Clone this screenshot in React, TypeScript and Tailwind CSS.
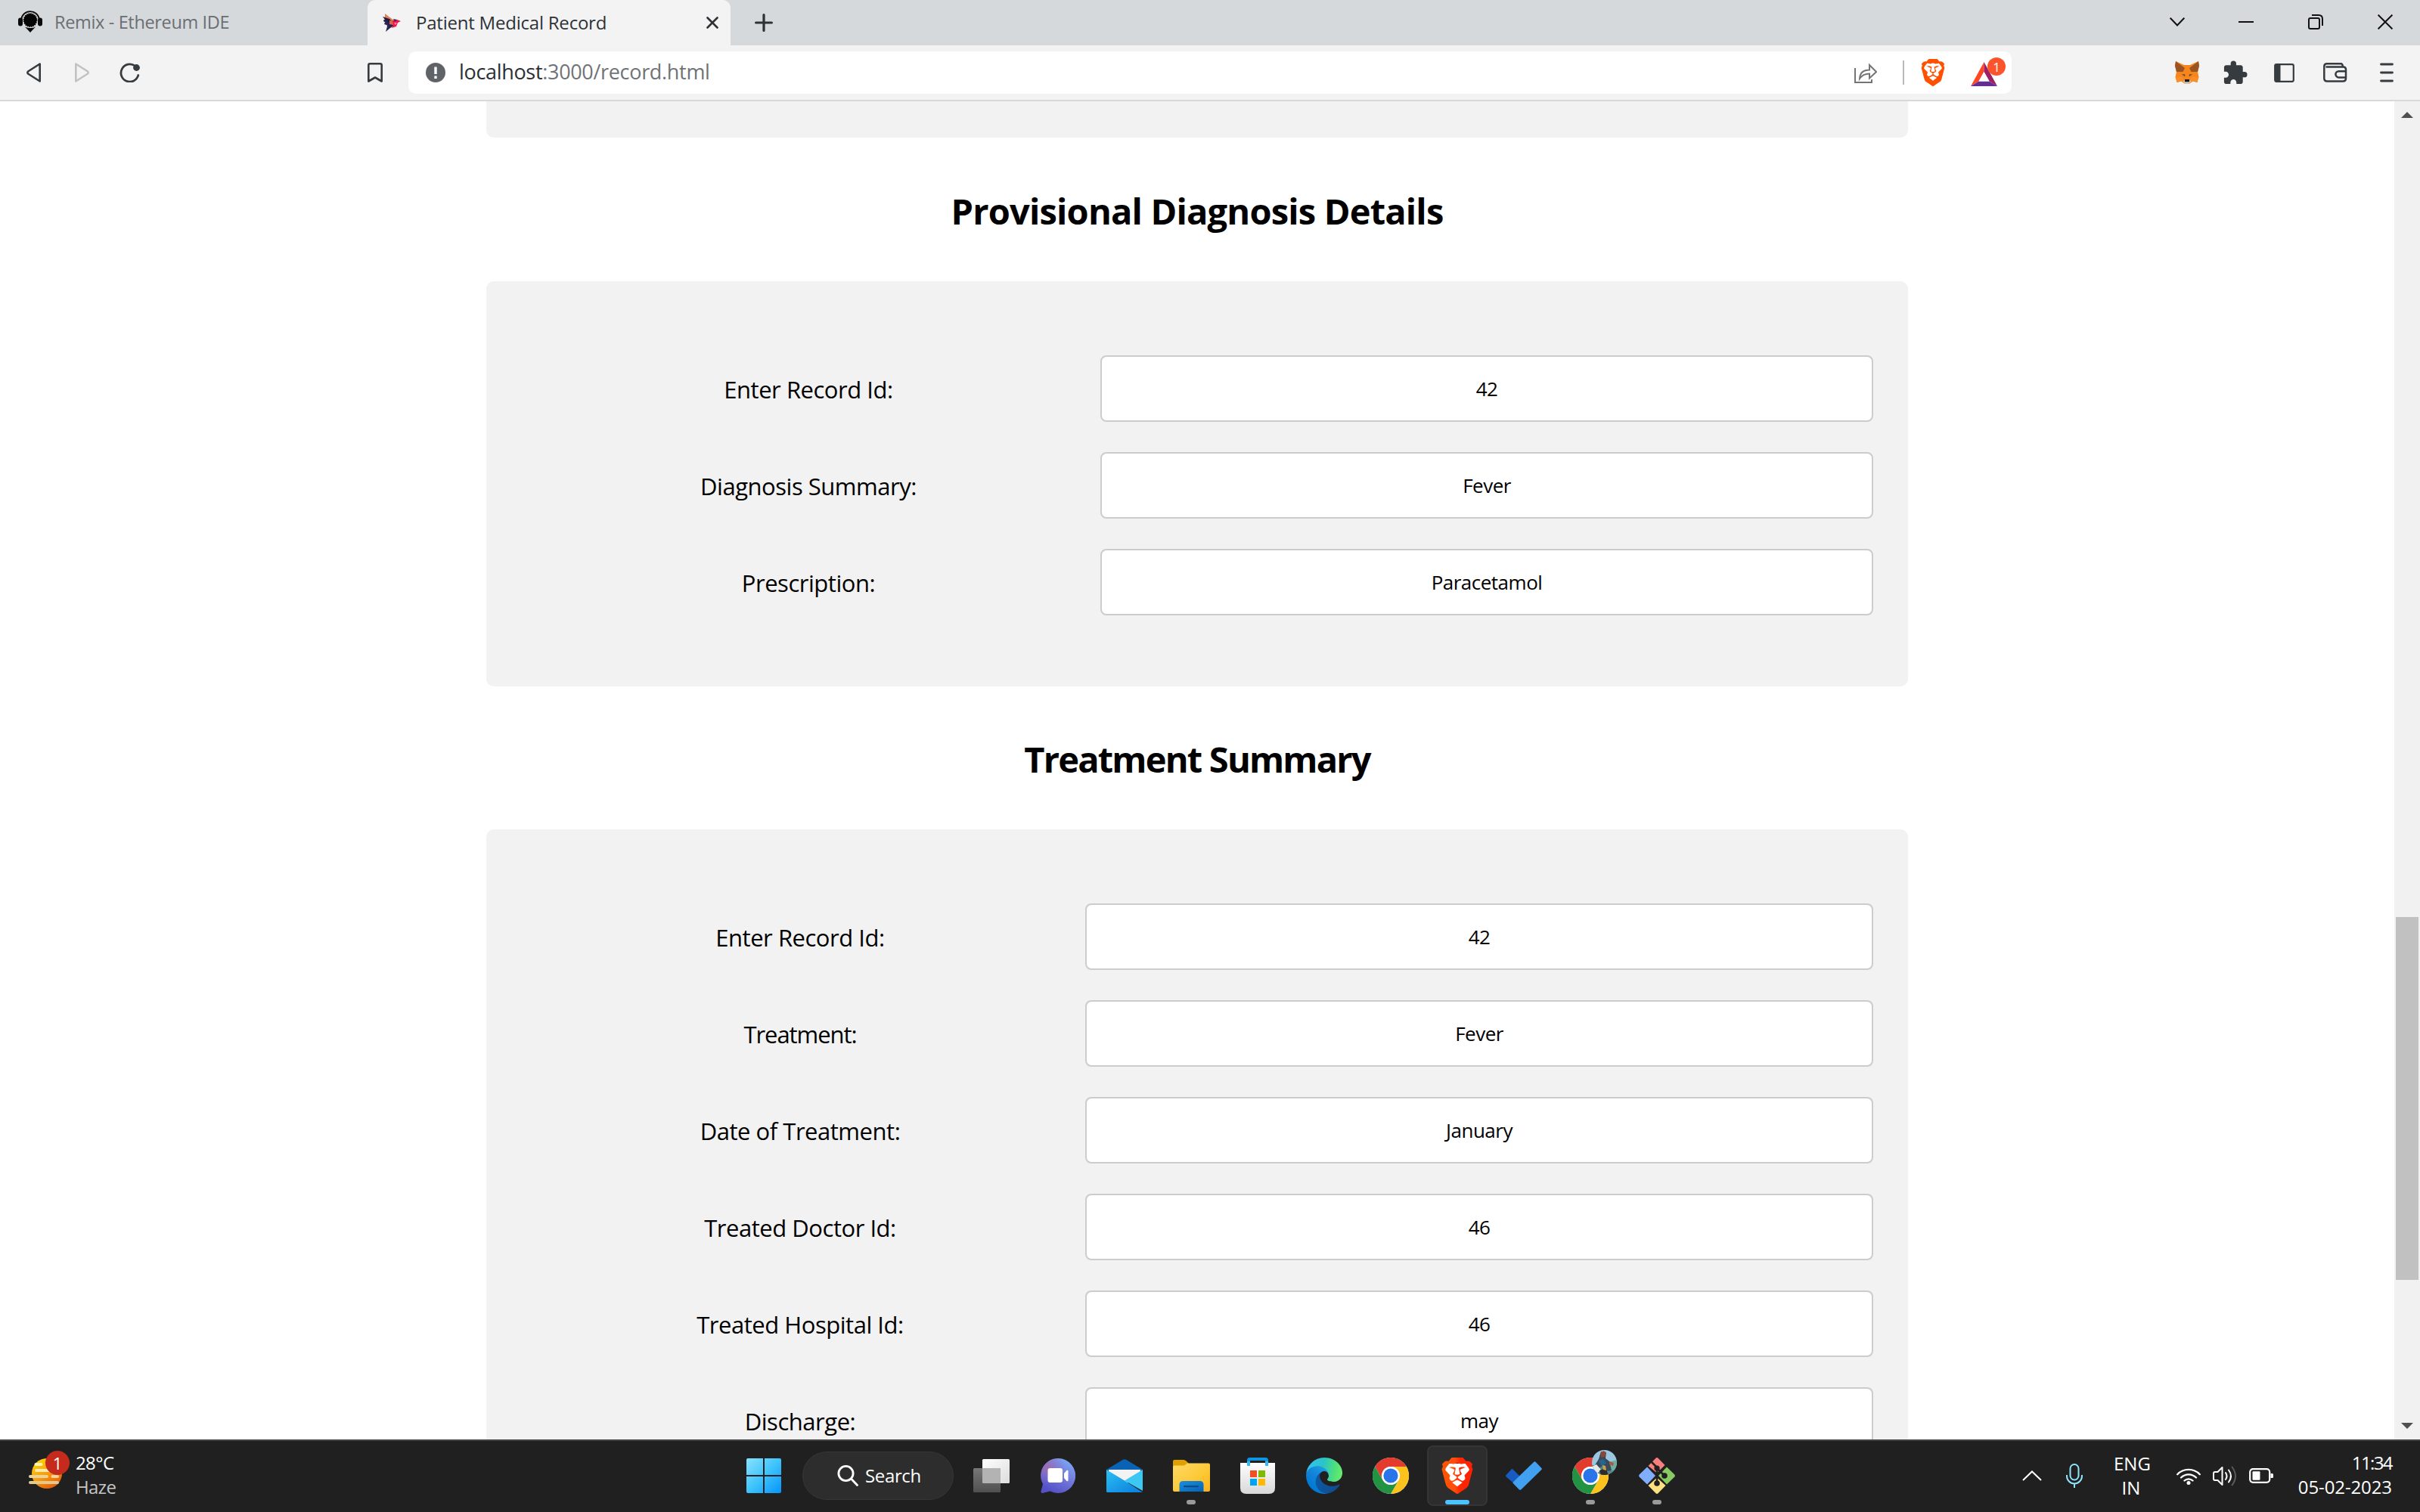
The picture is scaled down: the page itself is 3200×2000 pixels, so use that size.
import type { ReactNode } from "react";
import { SiBrave } from "react-icons/si";
import { MdExtension } from "react-icons/md";

/* ---------- browser icons ---------- */

function RemixIcon() {
  return (
    <svg className="ml-6 h-[30px] w-8 shrink-0" viewBox="0 0 32 30" fill="none">
      <path d="M4 12C5 5 10 1.2 16 1.2S27 5 28 12" stroke="#0a0a0a" strokeWidth="1.8" />
      <rect x="0" y="9.5" width="6" height="11" rx="3" fill="#0a0a0a" />
      <rect x="26" y="9.5" width="6" height="11" rx="3" fill="#0a0a0a" />
      <circle cx="16" cy="12.6" r="8.6" fill="#050505" />
      <circle cx="16" cy="12.6" r="8.6" stroke="#050505" strokeWidth="1.6" strokeDasharray="1.6 1.1" />
      <path d="M9 21.5c4.500 2 9.500 2 14 0L16 29z" fill="#0a0a0a" />
    </svg>
  );
}

function BirdIcon() {
  return (
    <svg className="ml-5 h-6 w-6 shrink-0" viewBox="0 0 24 24">
      <path d="M3 0l8 6 4 3-4 3-8-3z" fill="#e08055" />
      <path d="M0 4l9 3 5 5-6 4-6-3 2-2-3-2 2-1z" fill="#211a3f" />
      <path d="M2 8l6 3-3 4-3-1 2-2-3-2z" fill="#2b2350" />
      <path d="M5 13l6-3 4 6-5 3-6 5 2-7z" fill="#2b2350" />
      <path d="M9 9l6 1-1 5-5-1z" fill="#d9644c" />
      <path d="M13 9l6-1 5 2-4 2-2 5-6 2 2-4z" fill="#ee1748" />
      <path d="M14 7l5 1-3 3z" fill="#3a2a55" />
      <circle cx="17" cy="13" r="1.600" fill="#ff6f9b" />
    </svg>
  );
}

function ReloadIcon() {
  return (
    <svg className="ml-10 h-[26px] w-7" viewBox="0 0 28 26" fill="none">
      <path d="M20.500 4.200A11.600 11.600 0 1 0 24.800 16.500" stroke="#363b3f" strokeWidth="2.800" strokeLinecap="round" />
      <circle cx="22.500" cy="6.500" r="4.400" fill="#363b3f" />
    </svg>
  );
}

function ShareIcon() {
  return (
    <svg className="h-[27px] w-[30px]" viewBox="0 0 30 27" fill="none" stroke="#757575" strokeWidth="2">
      <path d="M1 7v19h22v-4" />
      <path d="M7 21c.500-8 5-11.500 13-11.500V3l9 9-9 8.500v-6C14 14.500 10 16.500 7 21z" />
    </svg>
  );
}

function BraveLion({ size }: { size: "small" | "large" }) {
  const box = size === "small" ? "h-9 w-9" : "h-12 w-12";
  return (
    <div className={"grid shrink-0 place-items-center " + box}>
      <svg className={"[grid-area:1/1] " + box} viewBox="0 0 24 24">
        <defs>
          <linearGradient id="braveLarge" x1="0" y1="0" x2="1" y2="0">
            <stop offset="0" stopColor="#ff5500" />
            <stop offset="0.42" stopColor="#ff4d0d" />
            <stop offset="0.6" stopColor="#ff2600" />
            <stop offset="1" stopColor="#ff2000" />
          </linearGradient>
        </defs>
        <path d="M5 4h14l1.500 4-3 10-5.500 3.500L6.500 18l-3-10z" fill="#fff" />
      </svg>
      {size === "small" ? (
        <SiBrave className="h-9 w-9 text-[#ff5000] [grid-area:1/1]" />
      ) : (
        <SiBrave className="h-12 w-12 [grid-area:1/1] [&_path]:fill-[url(#braveLarge)]" />
      )}
    </div>
  );
}

function RewardsIcon() {
  return (
    <div className="relative ml-8 h-9 w-[47px]">
      <svg className="mt-1 h-8 w-[35px]" viewBox="0 0 35 32">
        <path d="M17.500 0L0 32l10.500-6.500L17.500 13z" fill="#ff4724" />
        <path d="M17.500 0L35 32l-10.500-6.500L17.500 13z" fill="#9e1f63" />
        <path d="M0 32h35l-10.500-6.500h-14z" fill="#662d91" />
        <path d="M17.500 13l7 12.500h-14z" fill="#fff" />
      </svg>
      <span className="absolute -top-0.5 left-[22px] flex h-6 w-6 items-center justify-center rounded-full bg-[#fb542b] text-[17px] leading-none text-white">
        1
      </span>
    </div>
  );
}

function FoxIcon() {
  return (
    <svg className="h-[30px] w-8" viewBox="0 0 32 30">
      <path d="M1 0l11 5h8l11-5 1 6-2 8 1.500 7-2 7-6-1.500-4 3h-7l-4-3L2.500 28l-2-7L2 14 0 6z" fill="#f6851b" />
      <path d="M1 0l12 9-2.500 5L2 14 0 6zM31 0L19 9l2.500 5 8.500 0 2-8z" fill="#9a5424" />
      <path d="M2 21h8l1.500 5-3 .500-6 1.500zM30 21h-8l-1.500 5 3 .500 6 1.500z" fill="#f98f28" />
      <path d="M8 17l5 0 1 3zM24 17l-5 0-1 3z" fill="#c9601a" />
      <path d="M9.500 17.500h3.500v2.500zM22.500 17.500H19v2.500z" fill="#4a4a4a" />
      <path d="M10.500 26.500l3-2.500h5l3 2.500-3 3.500h-5z" fill="#cfc0b2" />
      <path d="M13 24h6v3.200h-6z" fill="#161616" />
    </svg>
  );
}

function SidebarIcon() {
  return (
    <svg className="ml-[37px] h-[25px] w-[27px]" viewBox="0 0 27 25" fill="none">
      <rect x="1.200" y="1.200" width="24.600" height="22.600" rx="2" stroke="#363b3f" strokeWidth="2.200" />
      <path d="M1 1h7.500v23H1z" fill="#363b3f" />
    </svg>
  );
}

function WalletIcon() {
  return (
    <svg className="ml-[38px] h-[26px] w-8" viewBox="0 0 32 26" fill="none" stroke="#363b3f" strokeWidth="2.500">
      <path d="M1.300 5v15.500q0 4 4 4H26q4 0 4-4V9q0-3.500-3.500-3.500H3.500" />
      <path d="M1.300 5q0-3.700 3.700-3.700h18.500q2 0 2.500 4" />
      <path d="M30 11.200h-9.500a4.100 4.100 0 0 0 0 8.200H30" />
    </svg>
  );
}

/* ---------- taskbar icons ---------- */

function WindowsLogo() {
  return (
    <svg className="h-[46px] w-[46px]" viewBox="0 0 46 46">
      <defs>
        <linearGradient id="win" gradientUnits="userSpaceOnUse" x1="0" y1="0" x2="46" y2="46">
          <stop offset="0" stopColor="#8ae2fd" />
          <stop offset="0.5" stopColor="#3fc4fc" />
          <stop offset="1" stopColor="#0594fb" />
        </linearGradient>
      </defs>
      <path d="M2 0h20v22H0V2q0-2 2-2zM24 0h20q2 0 2 2v20H24zM0 24h22v22H2q-2 0-2-2zM24 24h22v20q0 2-2 2H24z" fill="url(#win)" />
    </svg>
  );
}

function TaskViewIcon() {
  return (
    <svg className="h-11 w-12" viewBox="0 0 48 44">
      <defs>
        <linearGradient id="tv" x1="0" y1="0" x2="1" y2="1">
          <stop offset="0" stopColor="#fff" />
          <stop offset="1" stopColor="#dcdcdc" />
        </linearGradient>
        <linearGradient id="tvf" x1="0" y1="0" x2="0" y2="1">
          <stop offset="0" stopColor="#777" />
          <stop offset="1" stopColor="#505050" />
        </linearGradient>
      </defs>
      <rect x="12" y="0" width="36" height="32" rx="1.500" fill="url(#tv)" />
      <rect x="0" y="12" width="36" height="32" rx="1.500" fill="url(#tvf)" />
      <path d="M12 12h24v20H13.500q-1.500 0-1.500-1.500z" fill="#b3b3b3" />
    </svg>
  );
}

function ChatIcon() {
  return (
    <svg className="h-[46px] w-[46px]" viewBox="0 0 46 46">
      <defs>
        <linearGradient id="chat" x1="0.9" y1="0.1" x2="0.4" y2="1">
          <stop offset="0" stopColor="#7ba7f3" />
          <stop offset="0.5" stopColor="#7377da" />
          <stop offset="1" stopColor="#5552c9" />
        </linearGradient>
        <radialGradient id="chatGlow" cx="0.2" cy="0.25" r="0.5">
          <stop offset="0" stopColor="#a16aae" stopOpacity="0.9" />
          <stop offset="1" stopColor="#8a70c8" stopOpacity="0" />
        </radialGradient>
      </defs>
      <path d="M23 0a23 23 0 1 1-10.500 43.400L2.500 46Q0 46 .500 43.500L3 34A23 23 0 0 1 23 0z" fill="url(#chat)" />
      <path d="M23 0a23 23 0 1 1-10.500 43.400L2.500 46Q0 46 .500 43.500L3 34A23 23 0 0 1 23 0z" fill="url(#chatGlow)" />
      <rect x="9.500" y="13" width="19.500" height="19" rx="3" fill="#fff" />
      <path d="M31 20l3.500-4q2-1 2 1v12q0 2-2 1L31 26z" fill="#fff" />
    </svg>
  );
}

function MailIcon() {
  return (
    <svg className="h-11 w-12" viewBox="0 0 48 44">
      <defs>
        <linearGradient id="mailL" x1="0" y1="0" x2="1" y2="1">
          <stop offset="0" stopColor="#2cc0f5" />
          <stop offset="1" stopColor="#0a7cdc" />
        </linearGradient>
      </defs>
      <path d="M22 .800q2-1.200 4 0L48 14v4H0v-4z" fill="#0a62b4" />
      <path d="M3 14h42v6L24 34 3 20z" fill="#f3f3f3" />
      <path d="M48 14v28L24 28.500z" fill="#3dc8f4" />
      <path d="M0 14l24 14.500L48 44H1.500Q0 44 0 42.500z" fill="url(#mailL)" />
    </svg>
  );
}

function ExplorerIcon() {
  return (
    <svg className="h-[42px] w-[49px]" viewBox="0 0 49 42">
      <defs>
        <linearGradient id="fold" x1="0" y1="0" x2="1" y2="1">
          <stop offset="0" stopColor="#ffd969" />
          <stop offset="0.6" stopColor="#fcc834" />
          <stop offset="1" stopColor="#f7b21c" />
        </linearGradient>
        <linearGradient id="foldB" x1="0" y1="0" x2="1" y2="1">
          <stop offset="0" stopColor="#1c8fdc" />
          <stop offset="1" stopColor="#0463b6" />
        </linearGradient>
      </defs>
      <path d="M0 2q0-2 2-2h12q2 0 3.500 1.500L21 5v5H0z" fill="#e0a000" />
      <path d="M0 9.500q0-2 2-2h13l4-3h28q2 0 2 2V40q0 2-2 2H2q-2 0-2-2z" fill="url(#fold)" />
      <path d="M8.500 42V33q0-5 5-5h22q5 0 5 5v9z" fill="url(#foldB)" />
      <rect x="14" y="34" width="20" height="2.200" rx="1.100" fill="#0b4c88" />
    </svg>
  );
}

function StoreIcon() {
  return (
    <svg className="h-12 w-[46px]" viewBox="0 0 46 48">
      <defs>
        <linearGradient id="bag" x1="0" y1="0" x2="0" y2="1">
          <stop offset="0" stopColor="#fefefe" />
          <stop offset="1" stopColor="#d8d8d8" />
        </linearGradient>
      </defs>
      <path d="M0 7h46v33q0 8-8 8H8q-8 0-8-8z" fill="url(#bag)" />
      <path d="M11 11V3.500Q11 2 12.500 2h21Q35 2 35 3.500V11" fill="none" stroke="#0f94e4" strokeWidth="4" />
      <path d="M9 5h4v6H9zM33 5h4v6h-4z" fill="#35b9ee" />
      <path d="M13 17h9v9h-9z" fill="#f25022" />
      <path d="M24 17h9v9h-9z" fill="#7fba00" />
      <path d="M13 28h9v9h-9z" fill="#00a4ef" />
      <path d="M24 28h9v9h-9z" fill="#ffb900" />
    </svg>
  );
}

function EdgeIcon() {
  return (
    <svg className="h-12 w-12" viewBox="0 0 256 256">
      <defs>
        <linearGradient id="edgeA" x1="63" y1="177" x2="241" y2="177" gradientUnits="userSpaceOnUse">
          <stop offset="0" stopColor="#0c59a4" />
          <stop offset="1" stopColor="#114a8b" />
        </linearGradient>
        <linearGradient id="edgeB" x1="157" y1="100" x2="46" y2="222" gradientUnits="userSpaceOnUse">
          <stop offset="0" stopColor="#1b9de2" />
          <stop offset="0.5" stopColor="#1383d8" />
          <stop offset="1" stopColor="#0078d4" />
        </linearGradient>
        <linearGradient id="edgeC" x1="10" y1="60" x2="250" y2="100" gradientUnits="userSpaceOnUse">
          <stop offset="0" stopColor="#35c1f1" />
          <stop offset="0.45" stopColor="#2bc3c7" />
          <stop offset="0.8" stopColor="#4fe07a" />
          <stop offset="1" stopColor="#66eb6e" />
        </linearGradient>
      </defs>
      <path d="M231 190.500c-3.400 1.800-6.900 3.400-10.500 4.700a101 101 0 0 1-35.900 6.500c-47.300 0-88.500-32.500-88.500-74.300.100-11.400 6.400-21.900 16.400-27.300-42.800 1.800-53.800 46.400-53.800 72.500 0 73.900 68.100 81.400 82.800 81.400 7.900 0 19.800-2.300 27-4.600l1.300-.400a128 128 0 0 0 66.600-52.800 4 4 0 0 0-5.400-5.700z" fill="url(#edgeA)" />
      <path d="M105.700 241.400a79.200 79.200 0 0 1-22.700-21.300 80.700 80.700 0 0 1 29.500-120c3.200-1.500 8.500-4.100 15.600-4a32.400 32.400 0 0 1 25.700 13 31.900 31.900 0 0 1 6.300 18.700c0-.200 24.500-79.600-80-79.600-43.900 0-80 41.700-80 78.200a130.200 130.200 0 0 0 12.100 56 128 128 0 0 0 156.400 67.100 75.500 75.500 0 0 1-62.800-8z" fill="url(#edgeB)" />
      <path d="M152.300 148.900c-.900 1-3.400 2.500-3.400 5.600 0 2.600 1.700 5.200 4.800 7.300 14.400 10.100 41.700 8.700 41.800 8.700a59.600 59.600 0 0 0 30.300-8.300 61.400 61.400 0 0 0 30.400-52.900c.300-22.400-8-37.300-11.300-43.900C223.500 23.900 177.700 0 128 0A128 128 0 0 0 0 126.200c.500-36.500 36.800-66 80-66 3.500 0 23.500.300 42 10.100 16.300 8.600 24.900 18.900 30.800 29.200 6.200 10.700 7.300 24.100 7.300 29.500s-2.700 13.300-7.800 19.900z" fill="url(#edgeC)" />
    </svg>
  );
}

function ChromeIcon() {
  return (
    <svg className="h-12 w-12" viewBox="0 0 48 48">
      <circle cx="24" cy="24" r="24" fill="#fff" />
      <path d="M24 12h20.800A24 24 0 0 0 3.200 12l10.400 18A12 12 0 0 1 24 12z" fill="#e33b2e" />
      <path d="M34.400 30L24 48A24 24 0 0 0 44.800 12H24a12 12 0 0 1 10.400 18z" fill="#fcc31e" />
      <path d="M13.600 30L3.200 12A24 24 0 0 0 24 48l10.400-18a12 12 0 0 1-20.800 0z" fill="#229342" />
      <circle cx="24" cy="24" r="11.800" fill="#fff" />
      <circle cx="24" cy="24" r="9.600" fill="#2a74ea" />
    </svg>
  );
}

function ChromeProfileIcon() {
  return (
    <div className="relative h-12 w-12">
      <ChromeIcon />
      <svg className="absolute -top-2.5 left-[26px] h-[33px] w-[33px]" viewBox="0 0 33 33">
        <defs>
          <clipPath id="av">
            <circle cx="16.500" cy="16.500" r="16.500" />
          </clipPath>
        </defs>
        <g clipPath="url(#av)">
          <path d="M0 0h33v33H0z" fill="#9cc7e0" />
          <path d="M0 20h33v13H0z" fill="#56837f" />
          <path d="M22 16l11-3v12l-8 3z" fill="#6fae9d" />
          <path d="M12 2l7 1-1 8 5 4 3 12-8 1-3-8-8 6-3-6 5-8z" fill="#38495a" />
          <path d="M12 3l4-2 3 3-2 5-5 1z" fill="#8d4538" />
          <path d="M9 14l6-2 4 5-6 5z" fill="#24668f" />
          <path d="M23 15l6 2-1 4-5-2z" fill="#a65b47" />
          <path d="M0 22l6-3 6 7-5 5z" fill="#e4e8e6" />
          <path d="M10 27l8-3 4 9H12z" fill="#2c2c2c" />
          <path d="M14 20l4 1 1 6-4-1z" fill="#c9a14b" />
        </g>
      </svg>
    </div>
  );
}

function TodoIcon() {
  return (
    <svg className="h-[38px] w-12" viewBox="0 0 48 38">
      <path d="M9.500 10.500l10.500 10.500L10 28.500.600 20.500q-1-1.200 0-2.400l7-7.600q1-.900 1.900 0z" fill="#185abd" />
      <path d="M39.500.800L47.400 9q1 1 0 2L20.500 37.200q-1.500 1.200-2.800 0L10 29.200q-1-1 0-2L37.300.800q1.100-1 2.200 0z" fill="#41a0f0" />
    </svg>
  );
}

function GitIcon() {
  return (
    <svg className="h-12 w-12" viewBox="0 0 48 48">
      <path d="M22.500.700q1.500-1.200 3 0L34.500 10 24 20.500 12.500 11z" fill="#f77f7c" />
      <path d="M.700 22.500L11 12.500 22 24 11 35.500.700 25.500q-1-1.500 0-3z" fill="#80aefb" />
      <path d="M47.300 22.500L37 12.500 26 24l11 11.500 10.300-10q1-1.500 0-3z" fill="#8acb61" />
      <path d="M22.500 47.300q1.500 1.200 3 0L35.500 37 24 26.500 12.500 37z" fill="#fde180" />
      <path d="M16 5l8 8v22M24 14l10 10" stroke="#202020" strokeWidth="2.600" fill="none" />
      <circle cx="24" cy="14" r="3.600" fill="#202020" />
      <circle cx="34" cy="24" r="3.800" fill="#202020" />
      <circle cx="24" cy="34" r="3.800" fill="#202020" />
    </svg>
  );
}

function HazeIcon() {
  return (
    <div className="relative mb-[17px] ml-[38px] h-[50px] w-[54px]">
      <svg className="h-[50px] w-[46px]" viewBox="0 0 46 50">
        <defs>
          <linearGradient id="sun" x1="0.2" y1="0" x2="0.8" y2="1">
            <stop offset="0" stopColor="#fdd60a" />
            <stop offset="0.5" stopColor="#fb9d0a" />
            <stop offset="1" stopColor="#e0530b" />
          </linearGradient>
        </defs>
        <circle cx="24" cy="30" r="20" fill="url(#sun)" />
        <rect x="7.500" y="16" width="11" height="4" rx="2" fill="#fff3b4" />
        <rect x="8" y="24" width="26" height="4" rx="2" fill="#fdeab0" />
        <rect x="0" y="32" width="26" height="4" rx="2" fill="#e9d49b" />
        <rect x="29.500" y="32" width="10.500" height="4" rx="2" fill="#f5d49b" />
        <rect x="0" y="40" width="40" height="4" rx="2" fill="#e2c98e" />
      </svg>
      <span className="absolute left-[22px] top-0 flex h-8 w-8 items-center justify-center rounded-full bg-[#c42b1c] text-[22px] leading-none text-white">
        1
      </span>
    </div>
  );
}

/* ---------- layout pieces ---------- */

function TabStrip() {
  return (
    <div className="flex h-[60px] shrink-0 bg-[#d5d9dc]">
      <div className="flex w-[486px] items-center pb-0.5">
        <RemixIcon />
        <span className="ml-4 pt-px text-[23.5px] tracking-[-0.35px] text-[#6b6f73]">Remix - Ethereum IDE</span>
      </div>
      <div className="flex w-[480px] items-center rounded-t-[10px] bg-[#f3f3f3]">
        <BirdIcon />
        <span className="ml-5 pb-px text-[24px] tracking-[-0.22px] text-[#2e3236]">Patient Medical Record</span>
        <svg className="ml-auto mr-4 h-4 w-4" viewBox="0 0 16 16" stroke="#2e3236" strokeWidth="2.600" strokeLinecap="round">
          <path d="M1.500 1.500l13 13M14.500 1.500l-13 13" />
        </svg>
      </div>
      <svg className="ml-8 mt-[18px] h-6 w-6" viewBox="0 0 24 24" stroke="#2e3236" strokeWidth="3.200" strokeLinecap="round">
        <path d="M12 1.600v20.800M1.600 12h20.800" />
      </svg>
      <div className="ml-auto flex h-[58px] items-center pr-9">
        <svg className="h-3 w-5" viewBox="0 0 20 12" fill="none" stroke="#111" strokeWidth="2">
          <path d="M.700.700L10 10.500 19.300.700" />
        </svg>
        <div className="ml-[71px] h-0.5 w-5 bg-[#111]" />
        <svg className="ml-[72px] h-5 w-5" viewBox="0 0 20 20" fill="none" stroke="#111" strokeWidth="2">
          <rect x="1" y="5" width="14" height="14" rx="2" />
          <path d="M5 1h9q5 0 5 5v9" />
        </svg>
        <svg className="ml-[72px] h-5 w-5" viewBox="0 0 20 20" stroke="#111" strokeWidth="2">
          <path d="M.600.600l18.800 18.800M19.400.600L.600 19.400" />
        </svg>
      </div>
    </div>
  );
}

function Toolbar() {
  return (
    <div className="flex h-[74px] shrink-0 items-center border-b-2 border-[#d5d9dc] bg-[#f3f3f3]">
      <svg className="ml-[35px] h-[26px] w-5" viewBox="0 0 20 26" fill="none" stroke="#363b3f" strokeWidth="2.600" strokeLinejoin="round">
        <path d="M17.700 1.500v23L2 14.500Q.800 13 2 11.500z" />
      </svg>
      <svg className="ml-[43px] h-[26px] w-5" viewBox="0 0 20 26" fill="none" stroke="#c2c2c2" strokeWidth="2.600" strokeLinejoin="round">
        <path d="M2.300 1.500v23L18 14.500Q19.200 13 18 11.500z" />
      </svg>
      <ReloadIcon />
      <svg className="ml-[300px] h-[26px] w-5" viewBox="0 0 20 26" fill="none" stroke="#363b3f" strokeWidth="2.600" strokeLinejoin="round">
        <path d="M1.300 24.500V3.300q0-2 2-2h13.400q2 0 2 2v21.200L10 19.500z" />
      </svg>
      <div className="ml-[34px] flex h-14 w-[2120px] items-center rounded-[10px] bg-white">
        <svg className="ml-[23px] h-[26px] w-[26px]" viewBox="0 0 26 26">
          <circle cx="13" cy="13" r="13" fill="#5f6368" />
          <path d="M11.300 5.500h3.400v9.500h-3.400zM11.300 17.500h3.400v3.400h-3.400z" fill="#fff" />
        </svg>
        <span className="ml-[18px] pb-px text-[27px] tracking-[-0.32px] text-[#6f7377]">
          <span className="text-[#2b2f33]">localhost</span>:3000/record.html
        </span>
        <div className="ml-auto flex items-center pr-[7px]">
          <ShareIcon />
          <div className="ml-[34px] mr-[20px] h-8 w-0.5 bg-[#b9b9b9]" />
          <BraveLion size="small" />
          <RewardsIcon />
        </div>
      </div>
      <div className="ml-auto flex items-center pr-[35px]">
        <FoxIcon />
        <MdExtension className="ml-[30px] h-[35px] w-[35px] text-[#363b3f]" />
        <div className="-ml-[3px] flex items-center">
          <SidebarIcon />
          <WalletIcon />
          <svg className="ml-[43px] h-[26px] w-[18px]" viewBox="0 0 18 26" stroke="#363b3f" strokeWidth="2.800" strokeLinecap="round">
            <path d="M1.500 2h15M1.500 13h15M1.500 24h15" />
          </svg>
        </div>
      </div>
    </div>
  );
}

type Field = { label: string; value: string; tight?: boolean };

function FormCard({ fields, columns, tall }: { fields: Field[]; columns: string; tall?: boolean }) {
  return (
    <div
      className={
        "flex w-[1880px] shrink-0 flex-col gap-10 rounded-[10px] bg-[#f2f2f2] px-[46px] pt-[98px] " +
        (tall ? "h-[1100px]" : "h-[536px]")
      }
    >
      {fields.map((f) => (
        <div key={f.label} className={"grid h-[88px] shrink-0 items-center " + columns}>
          <div
            className={
              "pt-px text-center text-[31px] leading-10 text-black " + (f.tight ? "tracking-[-1.05px]" : "tracking-[-0.47px]")
            }
          >
            {f.label}
          </div>
          <div className="flex h-[88px] items-center justify-center rounded-lg border-2 border-[#ccc] bg-white text-[26px] tracking-[-0.5px] text-black">
            {f.value}
          </div>
        </div>
      ))}
    </div>
  );
}

const diagnosis: Field[] = [
  { label: "Enter Record Id:", value: "42" },
  { label: "Diagnosis Summary:", value: "Fever" },
  { label: "Prescription:", value: "Paracetamol" },
];

const treatment: Field[] = [
  { label: "Enter Record Id:", value: "42" },
  { label: "Treatment:", value: "Fever", tight: true },
  { label: "Date of Treatment:", value: "January" },
  { label: "Treated Doctor Id:", value: "46" },
  { label: "Treated Hospital Id:", value: "46" },
  { label: "Discharge:", value: "may" },
];

function RecordPage() {
  return (
    <div className="flex min-h-0 flex-1 overflow-hidden bg-white">
      <main className="flex flex-1 flex-col items-center overflow-hidden">
        <div className="h-12 w-[1880px] shrink-0 rounded-b-[10px] bg-[#f2f2f2]" />
        <h2 className="flex h-[190px] shrink-0 items-center pt-[5px] text-[47px] font-bold tracking-[-0.81px] text-black">
          Provisional Diagnosis Details
        </h2>
        <FormCard fields={diagnosis} columns="grid-cols-[760px_1022px] gap-x-1.5" />
        <h2 className="flex h-[189px] shrink-0 items-center pt-1 text-[47px] font-bold tracking-[-1.8px] text-black">
          Treatment Summary
        </h2>
        <FormCard fields={treatment} columns="grid-cols-[738px_1042px] gap-x-2" tall />
      </main>
      <div className="flex w-[34px] shrink-0 flex-col items-center bg-[#f1f1f1]">
        <svg className="mt-3.5 h-2 w-4" viewBox="0 0 16 8">
          <path d="M8 0l8 8H0z" fill="#505050" />
        </svg>
        <div className="mt-[1057px] h-[480px] w-[30px] bg-[#c1c1c1]" />
        <svg className="mb-3.5 mt-auto h-2 w-4" viewBox="0 0 16 8">
          <path d="M8 8L0 0h16z" fill="#505050" />
        </svg>
      </div>
    </div>
  );
}

function Slot({ children, running }: { children: ReactNode; running?: boolean }) {
  return (
    <div className="relative flex h-20 w-[88px] items-center justify-center">
      {children}
      {running && <span className="absolute bottom-0.5 left-[38px] h-1.5 w-3 rounded-full bg-[#9a9a9a]" />}
    </div>
  );
}

function Taskbar() {
  return (
    <div className="flex h-24 shrink-0 items-center border-t-2 border-[#434343] bg-[#202020] pb-0.5 text-[24px] leading-8 text-white">
      <div className="flex w-[966px] items-center">
        <HazeIcon />
        <div className="mb-0.5 ml-2 tracking-[-0.6px]">
          <div>28°C</div>
          <div className="text-[#c5c5c5]">Haze</div>
        </div>
      </div>
      <Slot>
        <WindowsLogo />
      </Slot>
      <div className="ml-[7px] mr-1.5 flex h-16 w-[200px] items-center rounded-full border border-[#363636] bg-[#2d2d2d]">
        <svg className="ml-[45px] h-7 w-7" viewBox="0 0 28 28" fill="none" stroke="#fff" strokeWidth="2.800" strokeLinecap="round">
          <circle cx="11.500" cy="11" r="9.600" />
          <path d="M18.500 18l8 8.500" />
        </svg>
        <span className="ml-[9px] tracking-[-0.36px]">Search</span>
      </div>
      <Slot>
        <TaskViewIcon />
      </Slot>
      <Slot>
        <ChatIcon />
      </Slot>
      <Slot>
        <MailIcon />
      </Slot>
      <Slot running>
        <ExplorerIcon />
      </Slot>
      <Slot>
        <StoreIcon />
      </Slot>
      <Slot>
        <EdgeIcon />
      </Slot>
      <Slot>
        <ChromeIcon />
      </Slot>
      <div className="relative mx-1 flex h-20 w-20 items-center justify-center rounded-lg border-2 border-[#353535] bg-[#2d2d2d]">
        <BraveLion size="large" />
        <span className="absolute bottom-0 left-[22px] h-1.5 w-8 rounded-full bg-[#4cc2ff]" />
      </div>
      <Slot>
        <TodoIcon />
      </Slot>
      <Slot running>
        <ChromeProfileIcon />
      </Slot>
      <Slot running>
        <GitIcon />
      </Slot>
      <div className="ml-auto flex items-center pr-[37px]">
        <svg className="h-3.5 w-[26px]" viewBox="0 0 26 14" fill="none" stroke="#fff" strokeWidth="2">
          <path d="M1 13L13 1.500 25 13" />
        </svg>
        <svg className="ml-8 h-8 w-[22px]" viewBox="0 0 22 32" fill="none" stroke="#8fe3fb" strokeWidth="2">
          <rect x="5.500" y="1" width="11" height="20.500" rx="5.500" />
          <path d="M1 15v1.500a10 10 0 0 0 20 0V15M11 26.500V32" />
        </svg>
        <div className="ml-[41px] w-[46px] text-center">
          <div>ENG</div>
          <div>IN</div>
        </div>
        <svg className="ml-[37px] h-[23px] w-8" viewBox="0 0 32 23" fill="none" stroke="#fff" strokeWidth="2.300" strokeLinecap="round">
          <path d="M1.200 9.200a20.500 20.500 0 0 1 29.600 0M6 13.500a14 14 0 0 1 20 0M10.500 17.500a8 8 0 0 1 11 0" />
          <circle cx="16" cy="20.500" r="2.500" fill="#fff" stroke="none" />
        </svg>
        <svg className="ml-4 h-[27px] w-8" viewBox="0 0 32 27" fill="none" stroke="#fff" strokeWidth="2" strokeLinejoin="round" strokeLinecap="round">
          <path d="M12.500 2v23L6.500 19H3q-2 0-2-2v-7q0-2 2-2h3.500z" />
          <path d="M17 9q3 4.500 0 9M21 5.500q6 8 0 16" />
          <path d="M25.500 1.500q9 12 0 24" stroke="#5a5a5a" />
        </svg>
        <svg className="ml-4 h-5 w-8" viewBox="0 0 32 20" fill="none">
          <rect x="1.200" y="1.200" width="26" height="17.600" rx="4" stroke="#fff" strokeWidth="2.200" />
          <rect x="4.500" y="4.200" width="10" height="11.600" rx="1" fill="#fff" />
          <path d="M28.500 7h2q1.500 0 1.500 1.500v3q0 1.500-1.500 1.500h-2z" fill="#fff" />
        </svg>
        <div className="mb-0.5 ml-8 w-[125px] whitespace-nowrap text-right">
          <div className="tracking-[-1.6px]">11:34</div>
          <div className="tracking-[-0.1px]">05-02-2023</div>
        </div>
      </div>
    </div>
  );
}

export default function App() {
  return (
    <div className="flex h-[2000px] w-[3200px] flex-col overflow-hidden bg-white font-['Open_Sans','Noto_Sans',sans-serif]">
      <TabStrip />
      <Toolbar />
      <RecordPage />
      <Taskbar />
    </div>
  );
}
